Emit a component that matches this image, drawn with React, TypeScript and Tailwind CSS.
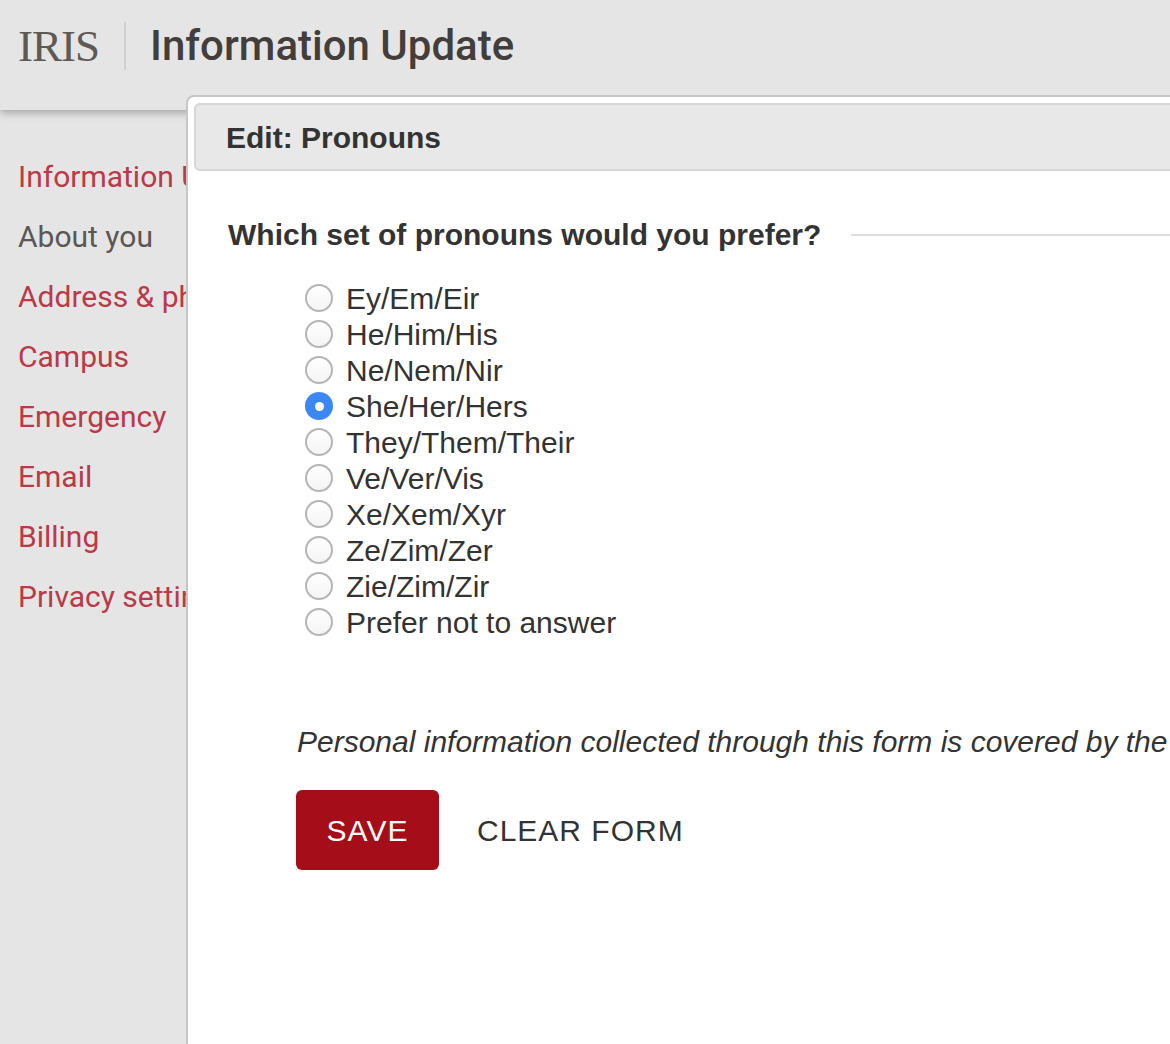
import { useState } from "react";

const navItems = [
    { label: "Information Update", active: false },
    { label: "About you", active: true },
    { label: "Address & phone", active: false },
    { label: "Campus", active: false },
    { label: "Emergency", active: false },
    { label: "Email", active: false },
    { label: "Billing", active: false },
    { label: "Privacy settings", active: false },
];

const pronouns = [
    "Ey/Em/Eir",
    "He/Him/His",
    "Ne/Nem/Nir",
    "She/Her/Hers",
    "They/Them/Their",
    "Ve/Ver/Vis",
    "Xe/Xem/Xyr",
    "Ze/Zim/Zer",
    "Zie/Zim/Zir",
    "Prefer not to answer",
];

function Radio({ checked }: { checked: boolean }) {
    if (checked) {
        return (
            <span className="w-[28px] h-[28px] rounded-full bg-[#3b88f5] flex items-center justify-center shrink-0">
                <span className="w-[9px] h-[9px] rounded-full bg-white" />
            </span>
        );
    }
    return (
        <span className="w-[28px] h-[28px] rounded-full border-2 border-[#b5b5b5] bg-gradient-to-b from-white to-[#f4f4f4] shrink-0" />
    );
}

export default function App() {
    const [selected, setSelected] = useState("She/Her/Hers");

    return (
        <div className="relative w-[1170px] h-[1044px] overflow-hidden bg-[#e5e5e5] font-['Roboto',sans-serif]">
            {/* header */}
            <header className="h-[110px] pb-[18px] flex items-center bg-[#e5e5e5] shadow-[0_3px_8px_rgba(0,0,0,0.28)] relative z-10">
                <span className="pl-[18px] pr-[25px] text-[45px] leading-none text-[#5e5955] font-['Liberation_Serif',serif] tracking-[-1px]">
                    IRIS
                </span>
                <span className="w-[2px] h-[48px] bg-[#d0d0d0]" />
                <h1 className="pl-[24px] text-[42px] font-medium text-[#433e3b] leading-none">
                    Information Update
                </h1>
            </header>

            {/* sidebar */}
            <nav className="w-[187px] pl-[18px] pt-[36px] flex flex-col whitespace-nowrap">
                {navItems.map((item) => (
                    <a
                        key={item.label}
                        className={`h-[60px] flex items-center text-[30px] ${item.active ? "text-[#5a5755]" : "text-[#b93a48]"}`}
                    >
                        {item.label}
                    </a>
                ))}
            </nav>

            {/* modal */}
            <div className="absolute left-[186px] top-[95px] w-[1100px] h-[1000px] z-20 bg-white border-2 border-[#c6c6c6] rounded-tl-[8px] p-[6px] font-['Liberation_Sans',Arial,sans-serif] text-[#333]">
                <div className="h-[68px] flex items-center pl-[30px] bg-[#e8e8e8] border-2 border-[#d6d6d6] rounded-[6px]">
                    <h2 className="text-[30px] font-bold text-[#333]">Edit: Pronouns</h2>
                </div>

                <div className="pl-[34px]">
                    <div className="mt-[44px] flex items-center gap-[30px]">
                        <h3 className="text-[30px] font-bold whitespace-nowrap leading-[40px]">
                            Which set of pronouns would you prefer?
                        </h3>
                        <span className="flex-1 h-[2px] bg-[#dddddd]" />
                    </div>

                    <div className="mt-[25px] pl-[77px] flex flex-col">
                        {pronouns.map((p) => (
                            <label
                                key={p}
                                onClick={() => setSelected(p)}
                                className="h-[36px] flex items-center gap-[13px] text-[30px] cursor-pointer"
                            >
                                <Radio checked={selected === p} />
                                <span>{p}</span>
                            </label>
                        ))}
                    </div>

                    <p className="mt-[82px] pl-[69px] text-[30px] italic leading-[40px] whitespace-nowrap">
                        Personal information collected through this form is covered by the Freedom of Information and Protection of Privacy Act.
                    </p>

                    <div className="mt-[28px] pl-[68px] flex items-center gap-[38px]">
                        <button className="w-[143px] h-[80px] rounded-[6px] bg-[#a50d18] text-white text-[30px] tracking-[1px]">
                            SAVE
                        </button>
                        <button className="text-[30px] tracking-[1px] text-[#333]">CLEAR FORM</button>
                    </div>
                </div>
            </div>
        </div>
    );
}
